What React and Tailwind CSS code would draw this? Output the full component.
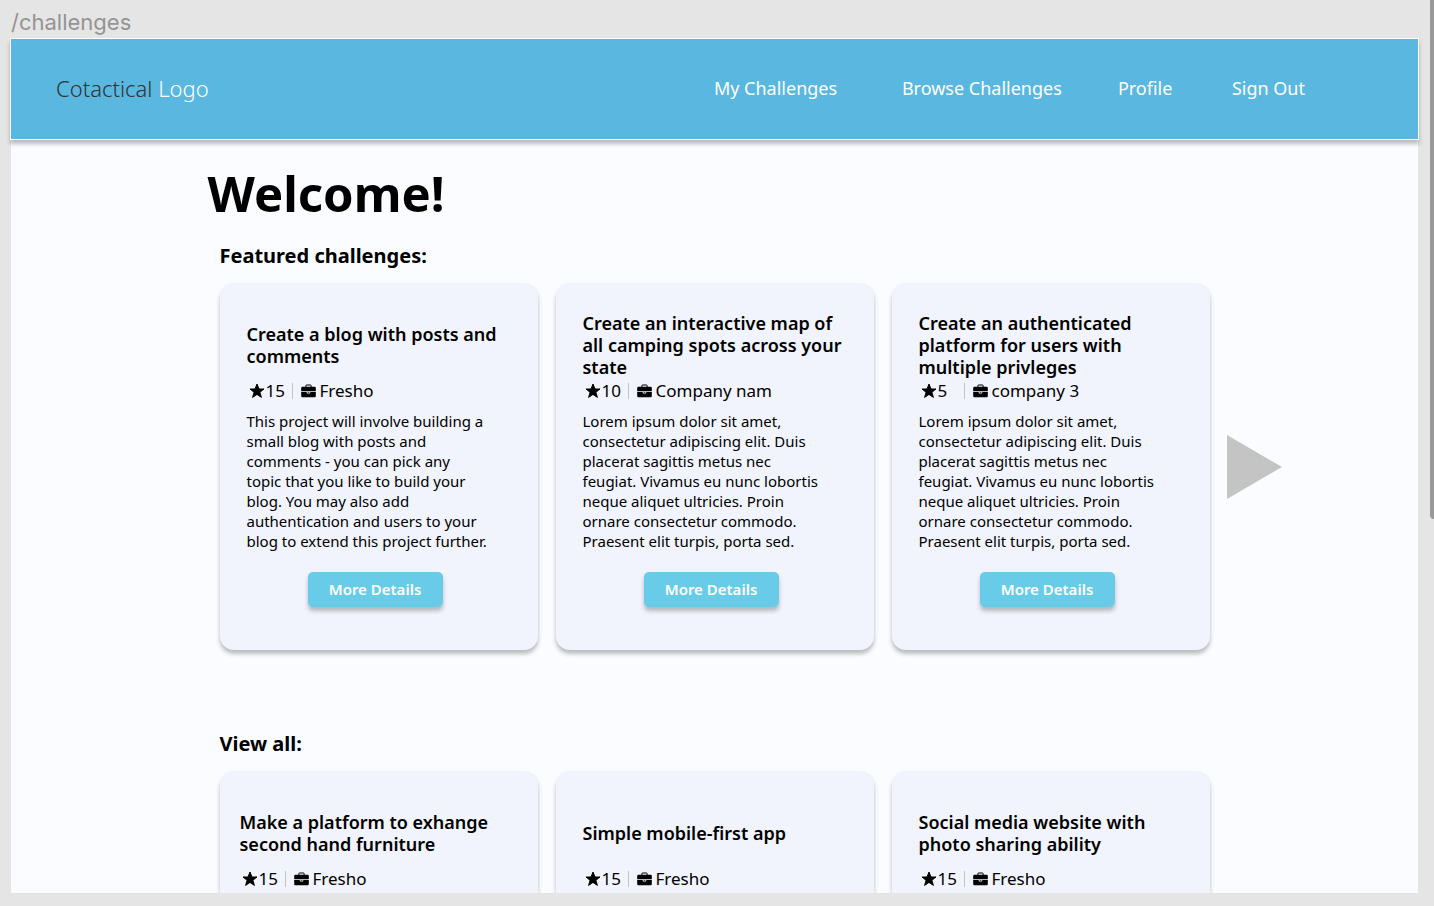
const featured = [
  {
    title: "Create a blog with posts and\ncomments",
    points: 15,
    company: "Fresho",
    text: "This project will involve building a\nsmall blog with posts and\ncomments - you can pick any\ntopic that you like to build your\nblog. You may also add\nauthentication and users to your\nblog to extend this project further.",
  },
  {
    title: "Create an interactive map of\nall camping spots across your\nstate",
    points: 10,
    company: "Company nam",
    text: "Lorem ipsum dolor sit amet,\nconsectetur adipiscing elit. Duis\nplacerat sagittis metus nec\nfeugiat. Vivamus eu nunc lobortis\nneque aliquet ultricies. Proin\nornare consectetur commodo.\nPraesent elit turpis, porta sed.",
  },
  {
    title: "Create an authenticated\nplatform for users with\nmultiple privleges",
    points: 5,
    company: "company 3",
    text: "Lorem ipsum dolor sit amet,\nconsectetur adipiscing elit. Duis\nplacerat sagittis metus nec\nfeugiat. Vivamus eu nunc lobortis\nneque aliquet ultricies. Proin\nornare consectetur commodo.\nPraesent elit turpis, porta sed.",
  },
];

const all = [
  { title: "Make a platform to exhange\nsecond hand furniture", points: 15, company: "Fresho", inset: "pl-5" },
  { title: "Simple mobile-first app", points: 15, company: "Fresho" },
  { title: "Social media website with\nphoto sharing ability", points: 15, company: "Fresho" },
];

function Star() {
  return (
    <svg viewBox="0 0 16 16" className="size-4 shrink-0" aria-hidden="true">
      <path
        d="M8 1l2 5h5l-4.100 3.200 1.500 5.200L8 11.400l-4.400 3 1.500-5.200L1 6h5z"
        fill="#000"
        stroke="#000"
        strokeWidth="1"
        strokeLinejoin="round"
      />
    </svg>
  );
}

function Briefcase() {
  return (
    <svg viewBox="0 0 15 14" className="h-3.5 w-[15px] shrink-0" aria-hidden="true">
      <path d="M4.900 3.200V1.500q0-.5.5-.5h4.200q.5 0 .5.500v1.700" fill="none" stroke="#000" strokeWidth="1" />
      <path d="M1.500 2.700h12q1.300 0 1.300 1.300v3.300H.2V4q0-1.300 1.300-1.300z" />
      <path d="M.2 8h5.500v.6q0 .9.900.9h1.800q.9 0 .9-.9V8h5.500v4q0 1.300-1.300 1.300h-12Q.2 13.300.2 12z" />
      <path d="M6.600 8h1.800v.7H6.600z" />
    </svg>
  );
}

function Card({ title, points, company, text, inset = "pl-[27px]" }) {
  return (
    <article
      className={`${inset} min-h-[367px] rounded-[14px] bg-[#f1f4fc] pt-[29px] pr-[34px] pb-[43px] shadow-[0_4px_4px_rgba(0,0,0,0.25)]`}
    >
      <h3 className="flex h-[66px] items-center text-[18px] leading-[22px] font-semibold whitespace-pre">{title}</h3>
      <div className="mt-px flex h-6 items-center pl-0.5 text-[17px] leading-6">
        <Star />
        <span className="ml-px w-[26px]">{points}</span>
        <span className="h-4 w-px bg-[#c4c4c4]" />
        <span className="ml-2 flex items-center gap-1">
          <Briefcase />
          {company}
        </span>
      </div>
      {text && (
        <>
          <p className="mt-2 text-[15px] leading-5 whitespace-pre">{text}</p>
          <button
            type="button"
            className="mx-auto mt-[21px] block h-[35px] w-[135px] rounded-[5px] bg-[#68cbe8] text-[15px] font-semibold text-white shadow-[0_4px_4px_rgba(0,0,0,0.25)]"
          >
            More Details
          </button>
        </>
      )}
    </article>
  );
}

function Section({ title, items, arrow }) {
  return (
    <section className="grid grid-cols-[1fr_990px_1fr] items-center">
      <h2 className="col-start-2 mb-[13px] text-[20px] leading-7 font-bold">{title}</h2>
      <div className="col-start-2 grid grid-cols-3 gap-[18px]">
        {items.map((item) => (
          <Card key={item.title} {...item} />
        ))}
      </div>
      {arrow && (
        <button type="button" aria-label="Next challenges" className="ml-[17px] justify-self-start">
          <svg viewBox="0 0 55 64" className="h-16 w-[55px]" aria-hidden="true">
            <path d="M0 0L55 32L0 64z" fill="#c4c4c4" />
          </svg>
        </button>
      )}
    </section>
  );
}

export default function App() {
  return (
    <div className="relative flex h-screen flex-col overflow-hidden bg-[#e5e5e5] pr-4 pb-[13px] pl-[11px] font-['Noto_Sans',sans-serif] text-black">
      <div className="flex h-[38px] shrink-0 items-center pt-1.5 font-['Inter',sans-serif] text-[22px] text-[#949494]">
        /challenges
      </div>
      <header className="z-10 -mx-px flex h-[102px] shrink-0 items-center justify-between border border-white bg-[#59b7e0] pr-[113px] pb-0.5 pl-[45px] text-white shadow-[0_4px_4px_rgba(0,0,0,0.25)]">
        <a href="#home" className="text-[22px] font-light">
          <span className="text-[#333]">Cotactical</span> Logo
        </a>
        <nav className="grid grid-cols-[188px_216px_114px_auto] text-[18px]">
          <a href="#mine">My Challenges</a>
          <a href="#browse">Browse Challenges</a>
          <a href="#profile">Profile</a>
          <a href="#signout">Sign Out</a>
        </nav>
      </header>
      <main className="min-h-0 flex-1 overflow-hidden bg-[#fbfcff] pt-[23px]">
        <div className="grid grid-cols-[1fr_990px_1fr]">
          <h1 className="col-start-2 -ml-3 text-[49px] leading-[60px] font-bold">Welcome!</h1>
        </div>
        <div className="mt-[19px] flex flex-col gap-20">
          <Section title="Featured challenges:" items={featured} arrow />
          <Section title="View all:" items={all} />
        </div>
      </main>
      <div className="absolute top-0 right-0 h-[519px] w-1 rounded-bl bg-[#999]" />
    </div>
  );
}
